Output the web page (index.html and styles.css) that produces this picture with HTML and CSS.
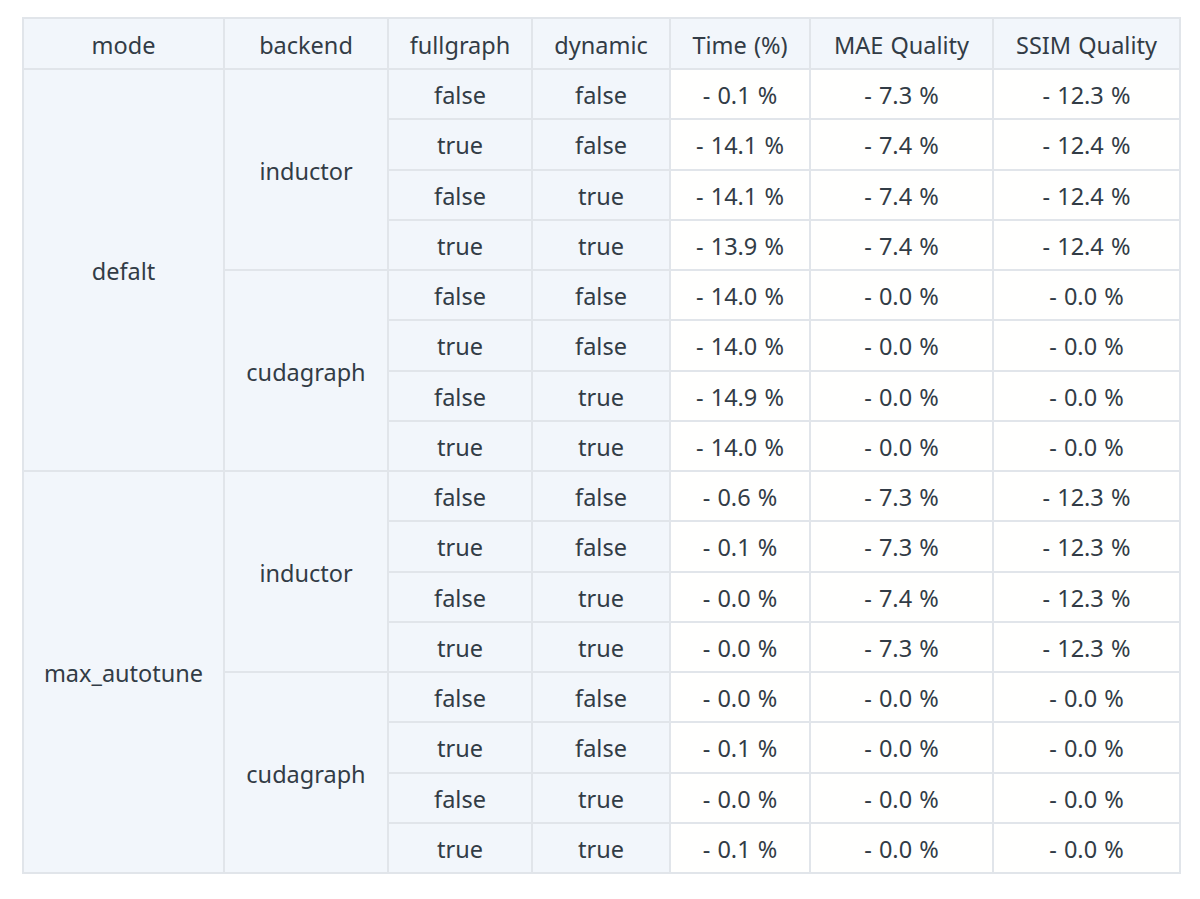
FILE: index.html
```html
<!DOCTYPE html>
<html>
<head>
<meta charset="utf-8">
<link rel="stylesheet" href="styles.css">
</head>
<body>
<table class="tbl">
<colgroup>
<col class="c1"><col class="c2"><col class="c3"><col class="c4"><col class="c5"><col class="c6"><col class="c7">
</colgroup>
<thead>
<tr><th>mode</th><th>backend</th><th>fullgraph</th><th>dynamic</th><th>Time (%)</th><th>MAE Quality</th><th>SSIM Quality</th></tr>
</thead>
<tbody>
<tr><td class="k" rowspan="8">defalt</td><td class="k" rowspan="4">inductor</td><td class="k">false</td><td class="k">false</td><td>- 0.1 %</td><td>- 7.3 %</td><td>- 12.3 %</td></tr>
<tr><td class="k">true</td><td class="k">false</td><td>- 14.1 %</td><td>- 7.4 %</td><td>- 12.4 %</td></tr>
<tr><td class="k">false</td><td class="k">true</td><td>- 14.1 %</td><td>- 7.4 %</td><td>- 12.4 %</td></tr>
<tr><td class="k">true</td><td class="k">true</td><td>- 13.9 %</td><td>- 7.4 %</td><td>- 12.4 %</td></tr>
<tr><td class="k" rowspan="4">cudagraph</td><td class="k">false</td><td class="k">false</td><td>- 14.0 %</td><td>- 0.0 %</td><td>- 0.0 %</td></tr>
<tr><td class="k">true</td><td class="k">false</td><td>- 14.0 %</td><td>- 0.0 %</td><td>- 0.0 %</td></tr>
<tr><td class="k">false</td><td class="k">true</td><td>- 14.9 %</td><td>- 0.0 %</td><td>- 0.0 %</td></tr>
<tr><td class="k">true</td><td class="k">true</td><td>- 14.0 %</td><td>- 0.0 %</td><td>- 0.0 %</td></tr>
<tr><td class="k" rowspan="8">max_autotune</td><td class="k" rowspan="4">inductor</td><td class="k">false</td><td class="k">false</td><td>- 0.6 %</td><td>- 7.3 %</td><td>- 12.3 %</td></tr>
<tr><td class="k">true</td><td class="k">false</td><td>- 0.1 %</td><td>- 7.3 %</td><td>- 12.3 %</td></tr>
<tr><td class="k">false</td><td class="k">true</td><td>- 0.0 %</td><td>- 7.4 %</td><td>- 12.3 %</td></tr>
<tr><td class="k">true</td><td class="k">true</td><td>- 0.0 %</td><td>- 7.3 %</td><td>- 12.3 %</td></tr>
<tr><td class="k" rowspan="4">cudagraph</td><td class="k">false</td><td class="k">false</td><td>- 0.0 %</td><td>- 0.0 %</td><td>- 0.0 %</td></tr>
<tr><td class="k">true</td><td class="k">false</td><td>- 0.1 %</td><td>- 0.0 %</td><td>- 0.0 %</td></tr>
<tr><td class="k">false</td><td class="k">true</td><td>- 0.0 %</td><td>- 0.0 %</td><td>- 0.0 %</td></tr>
<tr><td class="k">true</td><td class="k">true</td><td>- 0.1 %</td><td>- 0.0 %</td><td>- 0.0 %</td></tr>
</tbody>
</table>
</body>
</html>
```

FILE: styles.css
```css
html, body {
  margin: 0;
  padding: 0;
  background: #ffffff;
}
body {
  padding: 17px 0 0 22px;
  font-family: "Noto Sans", "Open Sans", sans-serif;
  color: #323c46;
}
.tbl {
  border-collapse: collapse;
  table-layout: fixed;
  width: 1157px;
  font-size: 23.5px;
  word-spacing: 1px;
}
.c1 { width: 201px; }
.c2 { width: 164px; }
.c3 { width: 144px; }
.c4 { width: 138px; }
.c5 { width: 140px; }
.c6 { width: 183px; }
.c7 { width: 187px; }
.tbl th,
.tbl td {
  border: 2px solid #e1e5ea;
  text-align: center;
  vertical-align: middle;
  padding: 2px 0 0 0;
  font-weight: 400;
  white-space: nowrap;
}
.tbl th {
  height: 47px;
  background: #f2f6fb;
}
.tbl td {
  height: 46.25px;
  background: #fffffe;
}
.tbl td.k {
  background: #f2f6fb;
}
```
